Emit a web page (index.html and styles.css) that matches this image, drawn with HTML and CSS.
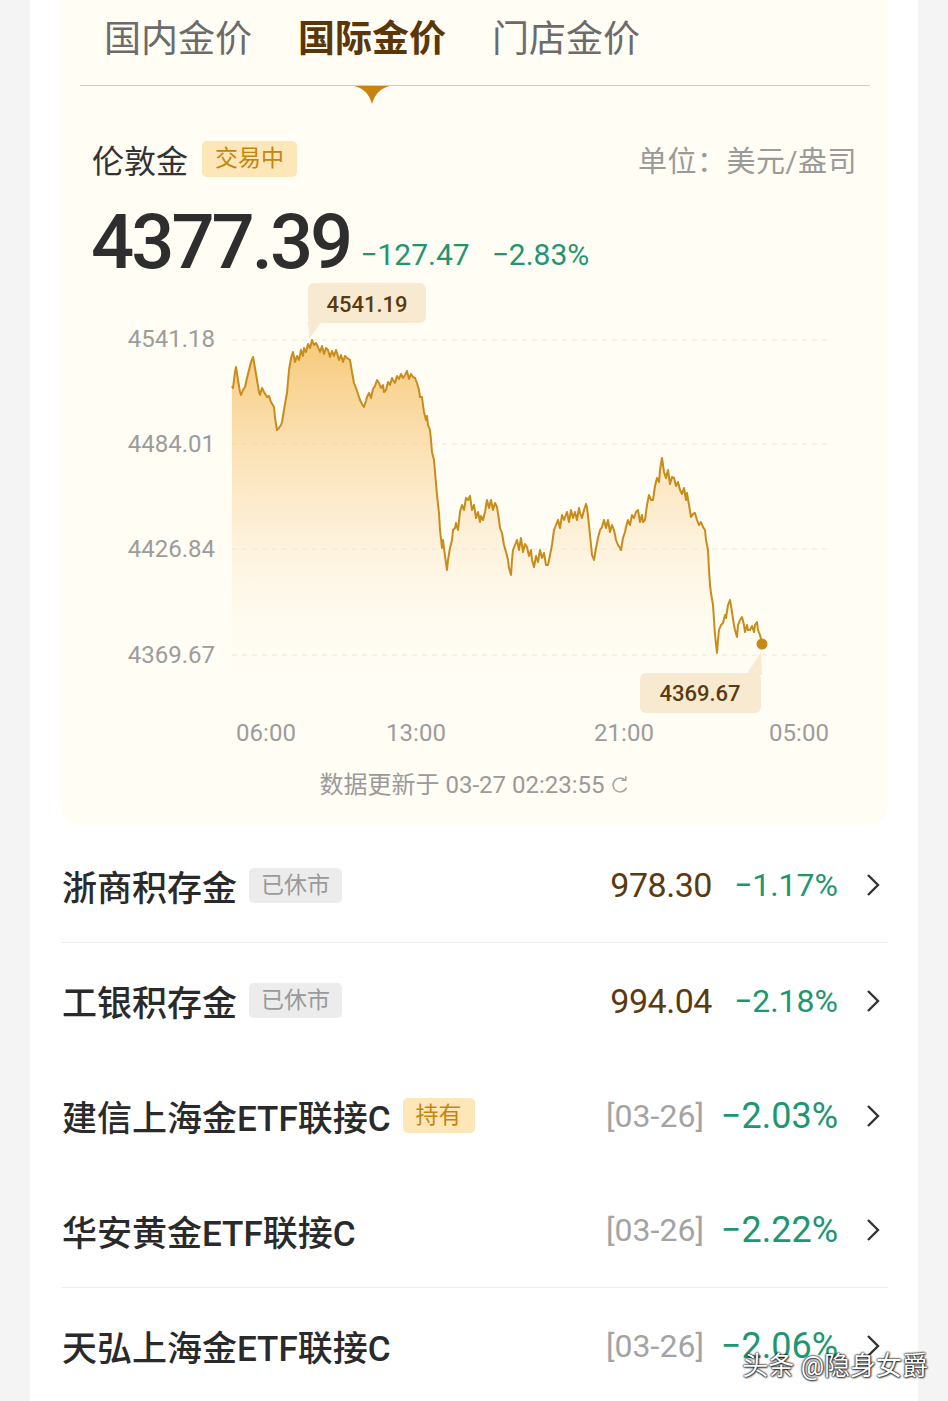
FILE: index.html
```html
<!DOCTYPE html>
<html lang="zh-CN">
<head>
    <meta charset="UTF-8">
    <meta name="viewport" content="width=device-width, initial-scale=1.0">
    <title>国际金价</title>
    <link rel="stylesheet" href="styles.css">
</head>
<body>
<div class="panel">
    <div class="card">
        <div class="tabs">
            <div class="tab">国内金价</div>
            <div class="tab active">国际金价
                <svg class="pointer" width="36" height="18" viewBox="0 0 36 18"><path d="M0 0 H36 Q22 3 18 18 Q14 3 0 0 Z"/></svg>
            </div>
            <div class="tab">门店金价</div>
        </div>

        <div class="quote-head">
            <div class="quote-name">伦敦金 <span class="tag tag-gold">交易中</span></div>
            <div class="unit">单位：美元/盎司</div>
        </div>

        <div class="price-row">
            <span class="price">4377.39</span>
            <span class="change">−127.47</span>
            <span class="change">−2.83%</span>
        </div>

        <svg class="chart" width="828" height="470" viewBox="60 280 828 470">
            <defs>
                <linearGradient id="area" gradientUnits="userSpaceOnUse" x1="0" y1="340" x2="0" y2="680">
                    <stop offset="0" stop-color="#f6c064" stop-opacity="0.85"/>
                    <stop offset="0.45" stop-color="#fadcaa" stop-opacity="0.6"/>
                    <stop offset="1" stop-color="#fff8ea" stop-opacity="0"/>
                </linearGradient>
            </defs>
            <g class="grid">
                <line x1="232" y1="340" x2="830" y2="340"/>
                <line x1="232" y1="444" x2="830" y2="444"/>
                <line x1="232" y1="549" x2="830" y2="549"/>
                <line x1="232" y1="655" x2="830" y2="655"/>
            </g>
            <text class="axis-y" x="215" y="339">4541.18</text>
            <text class="axis-y" x="215" y="444">4484.01</text>
            <text class="axis-y" x="215" y="549">4426.84</text>
            <text class="axis-y" x="215" y="655">4369.67</text>

            <polygon class="area" points="232,386 233,388 235,372 236,367 238,380 240,392 241,395 243,390 245,387 247,378 249,370 251,362 253,357 255,368 257,380 259,392 260,395 262,388 264,392 267,397 269,396 271,402 274,407 275,418 277,430 279,428 281,425 282,422 284,410 286,398 287,393 289,370 291,358 293,352 295,362 297,356 299,360 301,350 303,356 304,348 306,352 308,344 310,348 312,340 314,345 316,343 318,347 320,352 322,346 324,354 326,348 328,350 330,357 332,351 334,356 336,350 337,353 339,360 341,355 343,362 345,356 347,358 350,360 352,372 354,383 356,388 358,394 360,400 362,404 364,407 366,401 367,397 369,393 371,398 373,389 375,386 377,380 379,383 381,388 383,385 384,392 386,390 388,382 390,385 392,378 393,380 395,383 397,376 399,379 401,374 403,378 405,375 407,371 409,379 411,374 413,377 415,378 417,383 419,390 420,397 422,397 423,405 424,412 426,420 427,416 428,425 430,430 431,440 432,452 434,460 435,472 437,495 439,513 440,530 442,548 443,540 445,556 447,570 448,560 450,548 452,540 453,530 455,528 456,523 458,530 460,512 462,505 464,510 466,498 468,500 470,496 472,510 474,505 476,518 478,512 480,522 481,516 483,520 485,512 487,500 489,508 491,500 493,510 495,503 497,507 499,520 500,528 502,533 504,545 506,552 508,560 509,568 511,575 512,560 513,550 515,545 517,540 519,550 521,538 523,552 525,544 527,547 529,556 531,550 532,560 534,567 536,556 538,562 540,550 542,558 544,553 546,565 548,565 550,555 552,545 554,530 556,525 558,520 560,528 562,515 564,520 565,517 567,512 569,522 571,510 573,518 575,512 577,520 579,508 580,513 582,518 584,510 586,504 587,507 589,525 591,545 592,555 594,560 596,548 598,538 600,530 602,527 604,520 606,528 608,520 610,532 612,525 614,530 616,540 618,545 620,548 621,550 623,538 625,532 626,527 628,520 630,525 632,515 634,518 636,512 638,510 640,522 642,515 643,522 645,520 647,505 649,495 651,500 653,500 655,486 657,478 659,482 660,470 662,458 664,472 666,478 668,470 670,484 672,477 674,478 676,486 678,482 680,490 682,494 684,488 686,500 687,493 689,505 691,517 693,514 695,513 697,520 699,525 701,522 703,527 705,530 706,540 708,550 709,570 710,585 711,593 713,605 714,620 715,635 717,653 718,640 719,630 721,625 723,623 725,615 726,618 728,605 730,600 732,612 734,625 735,630 737,637 738,625 740,620 742,617 744,625 745,632 747,625 748,630 750,630 752,626 754,632 755,625 757,622 758,630 760,635 762,643 762,700 232,700"/>
            <polyline class="line" points="232,386 233,388 235,372 236,367 238,380 240,392 241,395 243,390 245,387 247,378 249,370 251,362 253,357 255,368 257,380 259,392 260,395 262,388 264,392 267,397 269,396 271,402 274,407 275,418 277,430 279,428 281,425 282,422 284,410 286,398 287,393 289,370 291,358 293,352 295,362 297,356 299,360 301,350 303,356 304,348 306,352 308,344 310,348 312,340 314,345 316,343 318,347 320,352 322,346 324,354 326,348 328,350 330,357 332,351 334,356 336,350 337,353 339,360 341,355 343,362 345,356 347,358 350,360 352,372 354,383 356,388 358,394 360,400 362,404 364,407 366,401 367,397 369,393 371,398 373,389 375,386 377,380 379,383 381,388 383,385 384,392 386,390 388,382 390,385 392,378 393,380 395,383 397,376 399,379 401,374 403,378 405,375 407,371 409,379 411,374 413,377 415,378 417,383 419,390 420,397 422,397 423,405 424,412 426,420 427,416 428,425 430,430 431,440 432,452 434,460 435,472 437,495 439,513 440,530 442,548 443,540 445,556 447,570 448,560 450,548 452,540 453,530 455,528 456,523 458,530 460,512 462,505 464,510 466,498 468,500 470,496 472,510 474,505 476,518 478,512 480,522 481,516 483,520 485,512 487,500 489,508 491,500 493,510 495,503 497,507 499,520 500,528 502,533 504,545 506,552 508,560 509,568 511,575 512,560 513,550 515,545 517,540 519,550 521,538 523,552 525,544 527,547 529,556 531,550 532,560 534,567 536,556 538,562 540,550 542,558 544,553 546,565 548,565 550,555 552,545 554,530 556,525 558,520 560,528 562,515 564,520 565,517 567,512 569,522 571,510 573,518 575,512 577,520 579,508 580,513 582,518 584,510 586,504 587,507 589,525 591,545 592,555 594,560 596,548 598,538 600,530 602,527 604,520 606,528 608,520 610,532 612,525 614,530 616,540 618,545 620,548 621,550 623,538 625,532 626,527 628,520 630,525 632,515 634,518 636,512 638,510 640,522 642,515 643,522 645,520 647,505 649,495 651,500 653,500 655,486 657,478 659,482 660,470 662,458 664,472 666,478 668,470 670,484 672,477 674,478 676,486 678,482 680,490 682,494 684,488 686,500 687,493 689,505 691,517 693,514 695,513 697,520 699,525 701,522 703,527 705,530 706,540 708,550 709,570 710,585 711,593 713,605 714,620 715,635 717,653 718,640 719,630 721,625 723,623 725,615 726,618 728,605 730,600 732,612 734,625 735,630 737,637 738,625 740,620 742,617 744,625 745,632 747,625 748,630 750,630 752,626 754,632 755,625 757,622 758,630 760,635 762,643"/>
            <circle class="dot" cx="762" cy="644" r="5.5"/>

            <g class="tip">
                <polygon points="308,321 322,321 309,339"/>
                <rect x="308" y="283" width="118" height="40" rx="6"/>
                <text x="367" y="304">4541.19</text>
            </g>
            <g class="tip">
                <polygon points="746,675 762,675 761,652"/>
                <rect x="640" y="673" width="121" height="40" rx="6"/>
                <text x="700" y="693">4369.67</text>
            </g>

            <text class="axis-x" x="266" y="733">06:00</text>
            <text class="axis-x" x="416" y="733">13:00</text>
            <text class="axis-x" x="624" y="733">21:00</text>
            <text class="axis-x" x="799" y="733">05:00</text>
        </svg>

        <div class="updated">数据更新于 03-27 02:23:55
            <svg class="refresh" width="18" height="18" viewBox="0 0 18 18"><path d="M14.5 4.5 A7 7 0 1 0 15.6 11.5"/><path d="M10.5 4.2 H14.8 V0.3"/></svg>
        </div>
    </div>

    <div class="list">
        <div class="row sep">
            <div class="name">浙商积存金<span class="tag tag-grey">已休市</span></div>
            <div class="vals">
                <span class="val">978.30</span>
                <span class="pct">−1.17%</span>
                <svg class="chev" width="14" height="24" viewBox="0 0 14 24"><polyline points="2,2 12,12 2,22"/></svg>
            </div>
        </div>
        <div class="row">
            <div class="name">工银积存金<span class="tag tag-grey">已休市</span></div>
            <div class="vals">
                <span class="val">994.04</span>
                <span class="pct">−2.18%</span>
                <svg class="chev" width="14" height="24" viewBox="0 0 14 24"><polyline points="2,2 12,12 2,22"/></svg>
            </div>
        </div>
        <div class="row">
            <div class="name">建信上海金ETF联接C<span class="tag tag-gold">持有</span></div>
            <div class="vals">
                <span class="date">[03-26]</span>
                <span class="pct big">−2.03%</span>
                <svg class="chev" width="14" height="24" viewBox="0 0 14 24"><polyline points="2,2 12,12 2,22"/></svg>
            </div>
        </div>
        <div class="row sep">
            <div class="name">华安黄金ETF联接C</div>
            <div class="vals">
                <span class="date">[03-26]</span>
                <span class="pct big">−2.22%</span>
                <svg class="chev" width="14" height="24" viewBox="0 0 14 24"><polyline points="2,2 12,12 2,22"/></svg>
            </div>
        </div>
        <div class="row">
            <div class="name">天弘上海金ETF联接C</div>
            <div class="vals">
                <span class="date">[03-26]</span>
                <span class="pct big">−2.06%</span>
                <svg class="chev" width="14" height="24" viewBox="0 0 14 24"><polyline points="2,2 12,12 2,22"/></svg>
            </div>
        </div>
    </div>
</div>
<div class="watermark">头条 @隐身女爵</div>
</body>
</html>
```

FILE: styles.css
```css
body {
    position: relative;
    margin: 0;
    background: #f4f4f4;
    font-family: Roboto, "Noto Sans CJK SC", sans-serif;
    color: #333;
}
.panel {
    margin: 0 30px;
    min-height: 1401px;
    max-height: 1401px;
    background: #ffffff;
    overflow: hidden;
}
.card {
    margin: 0 30px;
    background: #fffdf4;
    border-radius: 0 0 20px 20px;
    padding-bottom: 25px;
}

/* tabs */
.tabs {
    display: flex;
    gap: 46px;
    margin: 0 18px 0 20px;
    padding: 21px 0 0 24px;
    border-bottom: 1px solid #dccda3;
}
.tab {
    position: relative;
    font-size: 37px;
    line-height: 38px;
    padding-bottom: 26px;
    color: #6b6b6b;
}
.tab.active {
    color: #5a3608;
    font-weight: 700;
}
.pointer {
    position: absolute;
    left: 50%;
    top: 100%;
    margin-left: -18px;
    margin-top: 1px;
}
.pointer path {
    fill: #c8840e;
}

/* quote header */
.quote-head {
    display: flex;
    justify-content: space-between;
    align-items: center;
    margin-top: 55px;
    padding: 0 31px 0 32px;
    height: 36px;
}
.quote-name {
    display: flex;
    align-items: center;
    font-size: 32px;
    color: #333;
}
.unit {
    font-size: 29px;
    letter-spacing: 0.5px;
    color: #9a9a9a;
}
.tag {
    display: inline-block;
    font-size: 23px;
    line-height: 36px;
    padding: 0 13px;
    border-radius: 5px;
    margin-left: 14px;
    font-weight: 400;
}
.tag-gold {
    background: #fde6b8;
    color: #c3850f;
}
.tag-grey {
    background: #ececec;
    color: #9a9a9a;
    padding: 0 12px;
}
.price-row {
    display: flex;
    align-items: baseline;
    gap: 22px;
    margin-top: 27px;
    padding-left: 31px;
    height: 76px;
}
.price {
    font-size: 76px;
    line-height: 76px;
    font-weight: 500;
    letter-spacing: -3px;
    color: #2e2e2e;
    margin-right: -12px;
}
.change {
    font-size: 30px;
    color: #1e9670;
    position: relative;
    top: -3px;
}

/* chart */
.chart {
    display: block;
}
.grid line {
    stroke: #ebe6da;
    stroke-width: 1;
    stroke-dasharray: 5 5;
}
.axis-y {
    font-family: Roboto, sans-serif;
    font-size: 24px;
    fill: #9c9c9c;
    text-anchor: end;
    dominant-baseline: central;
}
.axis-x {
    font-family: Roboto, sans-serif;
    font-size: 24px;
    fill: #9c9c9c;
    text-anchor: middle;
    dominant-baseline: central;
}
.area {
    fill: url(#area);
}
.line {
    fill: none;
    stroke: #c88c1a;
    stroke-width: 2;
    stroke-linejoin: round;
}
.dot {
    fill: #c88a16;
}
.tip rect,
.tip polygon {
    fill: #f7ead0;
}
.tip text {
    font-family: Roboto, sans-serif;
    font-size: 22px;
    font-weight: 500;
    fill: #5a3a10;
    text-anchor: middle;
    dominant-baseline: central;
}
.updated {
    display: flex;
    justify-content: center;
    align-items: center;
    gap: 6px;
    margin-top: 20px;
    font-size: 24px;
    line-height: 30px;
    color: #9a9a9a;
}
.refresh path {
    fill: none;
    stroke: #a5a5a5;
    stroke-width: 1.6;
}

/* list */
.list {
    margin: 0 30px 0 32px;
    padding-top: 3px;
}
.row {
    display: flex;
    justify-content: space-between;
    align-items: center;
    height: 115px;
    box-sizing: border-box;
    padding-right: 8px;
}
.row.sep {
    border-bottom: 1px solid #ededed;
}
.name {
    display: flex;
    align-items: center;
    font-size: 35px;
    font-weight: 500;
    color: #2a2a2a;
}
.name .tag {
    line-height: 35px;
    margin-left: 12px;
}
.vals {
    display: flex;
    align-items: center;
}
.val {
    font-size: 34px;
    letter-spacing: -0.5px;
    color: #5b3a0e;
    margin-right: 22px;
}
.date {
    font-size: 32px;
    color: #a3a3a3;
    margin-right: 17px;
}
.pct {
    font-size: 32px;
    color: #1e9670;
}
.pct.big {
    font-size: 36px;
}
.chev {
    margin-left: 28px;
}
.chev polyline {
    fill: none;
    stroke: #333;
    stroke-width: 2.4;
}
.watermark {
    position: absolute;
    right: 20px;
    top: 1348px;
    font-size: 26px;
    line-height: 36px;
    color: #ffffff;
    text-shadow: 0 0 2px #000, 0 0 2px #000, 1px 1px 2px rgba(0, 0, 0, 0.6);
}
```
